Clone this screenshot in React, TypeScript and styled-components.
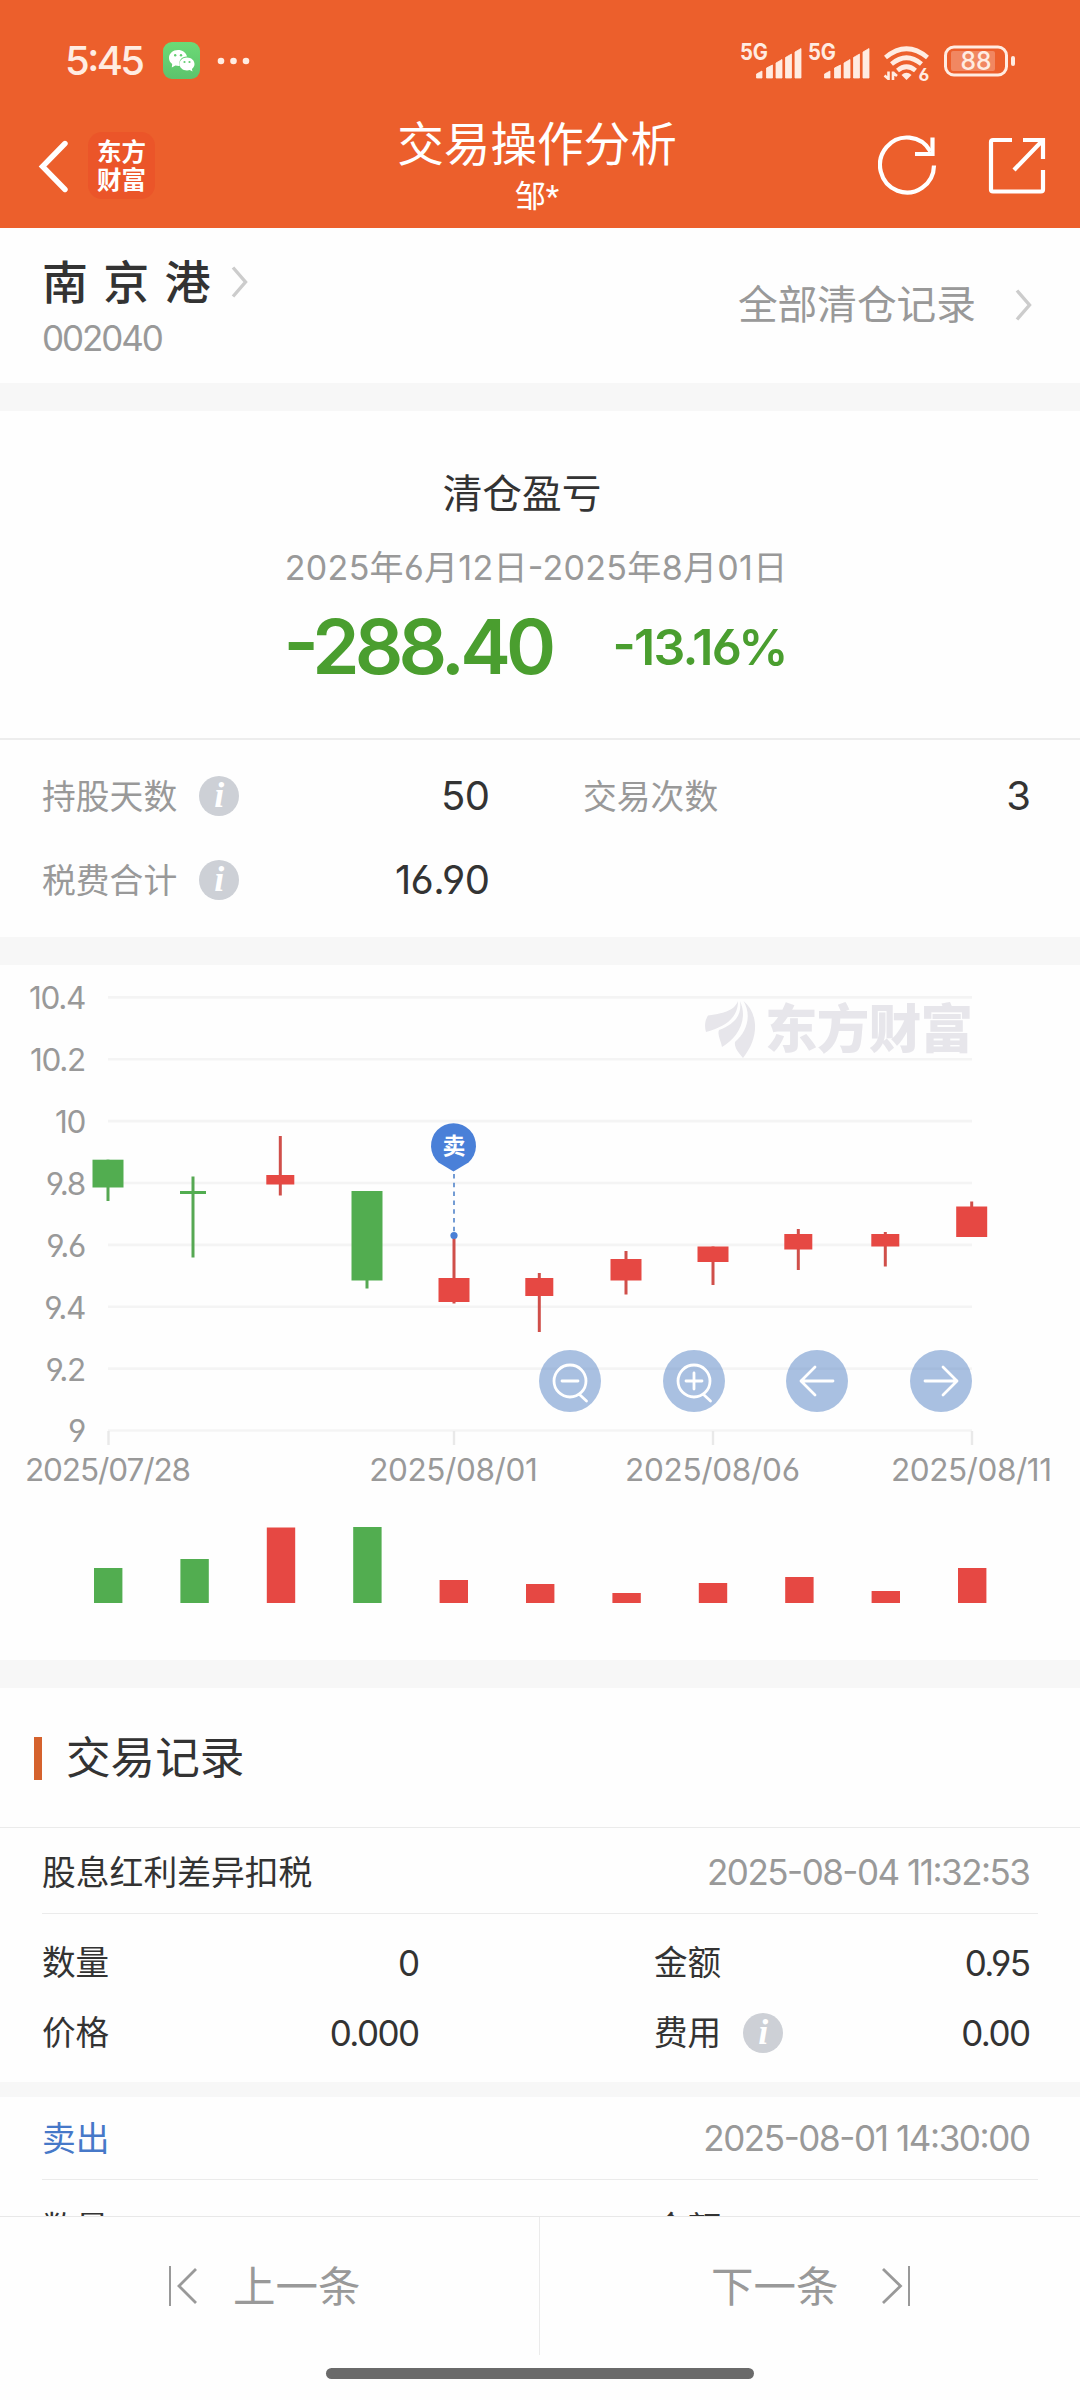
import React from "react";
import styled, { createGlobalStyle } from "styled-components";

const FONT = `Inter, "Noto Sans CJK SC", sans-serif`;
const GREEN = "#52ad50";
const RED = "#e64843";
const STATUS = "#ffece2";

const GlobalStyle = createGlobalStyle`
  * { box-sizing: border-box; }
  body {
    margin: 0;
    background: #fefefe;
    font-family: ${FONT};
    font-feature-settings: "case", "cv03", "cv04";
  }
`;

const Screen = styled.div`
  width: 1080px;
  height: 2400px;
  display: flex;
  flex-direction: column;
  overflow: hidden;
  background: #fefefe;
  color: #333;
`;

const Label = styled.span<{ $size: number; $color?: string; $weight?: number; $track?: number }>`
  font-size: ${(p) => p.$size}px;
  line-height: ${(p) => Math.round(p.$size * 1.2)}px;
  color: ${(p) => p.$color ?? "#333"};
  font-weight: ${(p) => p.$weight ?? 400};
  letter-spacing: ${(p) => p.$track ?? 0}px;
  margin-right: ${(p) => -(p.$track ?? 0)}px;
  white-space: pre;
`;

/* ---------- header ---------- */

const Header = styled.header`
  height: 228px;
  flex: none;
  background: #ec5f2c;
  color: #fff;
`;

const StatusBar = styled.div`
  height: 104px;
  padding: 17px 64px 0 65px;
  display: flex;
  align-items: center;
  justify-content: space-between;
`;

const StatusGroup = styled.div`
  display: flex;
  align-items: center;
`;

const SignalPair = styled.div`
  display: flex;
  margin-right: 7px;
`;

const WechatTile = styled.div`
  width: 37px;
  height: 37px;
  margin: 0 17px 0 18px;
  border-radius: 9px;
  background: linear-gradient(#6cda76, #5cc36c);
`;

const NavBar = styled.nav`
  height: 124px;
  padding: 0 34px 0 36px;
  display: grid;
  grid-template-columns: 1fr auto 1fr;
  align-items: start;
`;

const NavStart = styled.div`
  display: flex;
  align-items: center;
  padding-top: 28px;
  gap: 18px;
`;

const NavEnd = styled.div`
  display: flex;
  justify-content: flex-end;
  padding-top: 30px;
  gap: 50px;
`;

const Brand = styled.div`
  width: 67px;
  height: 67px;
  border-radius: 14px;
  background: #eb5529;
  display: flex;
  flex-direction: column;
  align-items: center;
  justify-content: center;
  font-size: 24.5px;
  line-height: 28px;
  font-weight: 700;
`;

const NavTitle = styled.div`
  display: flex;
  flex-direction: column;
  align-items: center;
  padding-top: 12px;
  margin-left: -8px;
  gap: 6px;
`;

const Owner = styled(Label)`
  font-feature-settings: normal;
  font-family: Roboto, "Noto Sans CJK SC", sans-serif;
`;

/* ---------- shared ---------- */

const Content = styled.main`
  flex: 1;
  min-height: 0;
  overflow: hidden;
`;

const Gap = styled.div<{ $h: number }>`
  height: ${(p) => p.$h}px;
  background: #f7f7f7;
`;

const InfoDot = styled.i`
  width: 40px;
  height: 40px;
  border-radius: 50%;
  background: #cdd0d6;
  color: #fff;
  display: inline-flex;
  justify-content: center;
  font: italic 700 36px/38px "Liberation Serif", serif;
`;

/* ---------- stock row ---------- */

const StockRow = styled.section`
  height: 155px;
  padding: 26px 48px 0 42px;
  display: flex;
  justify-content: space-between;
`;

const StockName = styled.div`
  display: flex;
  align-items: center;
  gap: 20px;
  height: 56px;
`;

const StockCode = styled.div`
  display: flex;
  padding-top: 7px;
`;

const AllRecords = styled.div`
  display: flex;
  align-items: center;
  height: 102px;
  gap: 39px;
`;

/* ---------- profit ---------- */

const Profit = styled.section`
  height: 329px;
  padding-top: 59px;
  border-bottom: 2px solid #ededed;
  display: flex;
  flex-direction: column;
  align-items: center;
`;

const ProfitDate = styled.div`
  display: flex;
  margin: 29px 0 0 -8px;
`;

const ProfitTitle = styled.div`
  display: flex;
  margin-left: -36px;
`;

const ProfitNumbers = styled.div`
  display: flex;
  align-items: center;
  justify-content: space-between;
  width: 505px;
  margin: 13px 0 0 -8px;
`;

const Stats = styled.section`
  height: 197px;
  padding: 14px 49px 0 42px;
  display: grid;
  grid-template-columns: 448px 448px;
  grid-auto-rows: 84px;
  column-gap: 93px;
`;

const Pair = styled.div`
  display: flex;
  align-items: center;
  justify-content: space-between;
`;

const Tagged = styled.div`
  display: flex;
  align-items: center;
  gap: 22px;
`;

/* ---------- chart ---------- */

const ChartPanel = styled.section`
  position: relative;
  height: 695px;
`;

const ChartControls = styled.div`
  position: absolute;
  left: 539px;
  top: 385px;
  width: 433px;
  display: flex;
  justify-content: space-between;
`;

const ChartButton = styled.button`
  width: 62px;
  height: 62px;
  padding: 0;
  border: 0;
  border-radius: 50%;
  background: rgba(74, 124, 193, 0.47);
  display: flex;
`;

type Candle = {
  x: number;
  w: number;
  top: number;
  bottom: number;
  hi: number;
  lo: number;
  up: boolean;
  vol: number;
};

const candles: Candle[] = [
  { x: 108, w: 31, top: 194.7, bottom: 222.5, hi: 194.7, lo: 236, up: false, vol: 35 },
  { x: 193, w: 26, top: 226, bottom: 229, hi: 211.5, lo: 292.5, up: false, vol: 44 },
  { x: 280.3, w: 28, top: 210, bottom: 219.5, hi: 171, lo: 230.5, up: true, vol: 75.5 },
  { x: 367, w: 31, top: 226, bottom: 315.5, hi: 226, lo: 323.5, up: false, vol: 76 },
  { x: 454, w: 31, top: 313, bottom: 337, hi: 272, lo: 338.5, up: true, vol: 23 },
  { x: 539.3, w: 28, top: 313, bottom: 331, hi: 308, lo: 367, up: true, vol: 19 },
  { x: 626, w: 31, top: 294, bottom: 315.5, hi: 286, lo: 329.5, up: true, vol: 10 },
  { x: 713, w: 31, top: 281.5, bottom: 297, hi: 281.5, lo: 320, up: true, vol: 20 },
  { x: 798.3, w: 28, top: 269, bottom: 284.5, hi: 264, lo: 305, up: true, vol: 26 },
  { x: 885.3, w: 28, top: 269, bottom: 281.5, hi: 267, lo: 301.5, up: true, vol: 12 },
  { x: 971.7, w: 31, top: 241.5, bottom: 272, hi: 236.5, lo: 272, up: true, vol: 35 },
];

const priceLabels = ["10.4", "10.2", "10", "9.8", "9.6", "9.4", "9.2", "9"];
const dateLabels = [
  { x: 108.5, text: "2025/07/28", w: 166 },
  { x: 454, text: "2025/08/01", w: 168.5 },
  { x: 713, text: "2025/08/06", w: 175 },
  { x: 972, text: "2025/08/11", w: 161 },
];

const Chart = () => (
  <svg width="1080" height="695" viewBox="0 0 1080 695" fontFamily={FONT}>
    {priceLabels.map((t, i) => {
      const y = 32.4 + i * 61.87;
      return (
        <g key={t}>
          <line x1="108" x2="972" y1={y} y2={y} stroke="#f4f4f4" strokeWidth="2.6" />
          <text x="85" y={y + 11.9} textAnchor="end" fontSize="31.5" letterSpacing="-1.3" fill="#999">
            {t}
          </text>
        </g>
      );
    })}
    {dateLabels.map((d) => (
      <g key={d.text}>
        <line x1={d.x} x2={d.x} y1="466" y2="480" stroke="#e9e9e9" strokeWidth="2.4" />
        <text x={d.x - d.w / 2 - 0.5} y="516.3" fontSize="31.5" textLength={d.w} fill="#999">
          {d.text}
        </text>
      </g>
    ))}
    <g fill="#e7e6eb">
      <path d="M738 36 C735 44 727 48 708 50.500 C704.500 56 704.500 62 706 67 C724 62 738 54 738 36 Z" />
      <path d="M740 36 C742 50 735 59 719 65 C717 70 721 76 722 82 C736 74 749 56 740 36 Z" />
      <path d="M743.500 36 C758 48 760 72 743 93 C739 88 734 83 735 77 C747 67 752 50 743.500 36 Z" />
      <text x="765" y="82.500" fontSize="52.500" fontWeight="900" textLength="208" fontFamily='"Noto Sans CJK SC", sans-serif'>
        东方财富
      </text>
    </g>
    {candles.map((c) => {
      const fill = c.up ? RED : GREEN;
      return (
        <g key={c.x}>
          <line x1={c.x} x2={c.x} y1={c.hi} y2={c.lo} stroke={c.up ? "#d04f4a" : "#56a853"} strokeWidth="3" />
          <rect x={c.x - c.w / 2} y={c.top} width={c.w} height={c.bottom - c.top} fill={fill} />
        </g>
      );
    })}
    {candles.map((c, i) => (
      <rect
        key={c.x}
        x={94 + i * 86.4}
        y={638 - c.vol}
        width="28.4"
        height={c.vol}
        fill={c.up ? RED : GREEN}
      />
    ))}
    <line x1="454" x2="454" y1="209" y2="268" stroke="#6592d0" strokeWidth="1.8" strokeDasharray="4.5 4.3" />
    <circle cx="454" cy="270.5" r="3.6" fill="#4a80d6" />
    <path d="M453.500 206.500 L438.500 197.500 A22.500 22.500 0 1 1 468.500 197.500 Z" fill="#4a80d8" />
    <text x="454" y="188.700" textAnchor="middle" fontSize="23" fontWeight="700" fill="#fff">
      卖
    </text>
  </svg>
);

/* ---------- records ---------- */

const SectionTitle = styled.h2`
  height: 140px;
  margin: 0;
  padding: 1px 0 0 34px;
  border-bottom: 1px solid #ebebeb;
  display: flex;
  align-items: center;
  gap: 24px;
`;

const TitleMark = styled.span`
  width: 8px;
  height: 43px;
  background: #d5622d;
`;

const RecordList = styled.section`
  padding-top: 3px;
`;

const Record = styled.article`
  display: flex;
  flex-direction: column;
`;

const RecordHead = styled.div`
  height: 83px;
  margin: 0 42px;
  padding: 0 7px 0 0;
  border-bottom: 1px solid #ebebeb;
  display: flex;
  align-items: center;
  justify-content: space-between;
`;

const RecordBody = styled.div`
  height: 168px;
  padding: 14px 49px 0 42px;
  display: grid;
  grid-template-columns: 378px 377px;
  justify-content: space-between;
  grid-auto-rows: 70px;
`;

const Footer = styled.footer`
  height: 184px;
  flex: none;
  border-top: 1px solid #e8e8e8;
  background: #fefefe;
  display: flex;
  flex-direction: column;
  align-items: center;
`;

const Pager = styled.div`
  width: 100%;
  height: 138px;
  display: grid;
  grid-template-columns: 1fr 1fr;
`;

const PagerItem = styled.div<{ $side: "prev" | "next" }>`
  display: flex;
  align-items: center;
  gap: ${(p) => (p.$side === "prev" ? 35 : 42)}px;
  padding-left: ${(p) => (p.$side === "prev" ? 168 : 171)}px;
  border-right: ${(p) => (p.$side === "prev" ? "1px solid #ebebeb" : "none")};
`;

const HomeIndicator = styled.div`
  width: 428px;
  height: 11px;
  margin-top: 13px;
  border-radius: 6px;
  background: #6a6a6a;
`;

/* ---------- icons ---------- */

const WechatGlyph = () => (
  <svg width="37" height="37" viewBox="0 0 37 37">
    <path d="M15 8C10 8 6 11.500 6 16c0 2.500 1.300 4.600 3.200 6L8.800 25.500l3.600-2c3 .8 4.500.3 4.500.3C15 18.500 19 14.300 24 14.500 23 10.500 19.500 8 15 8z" fill="#fff" />
    <path d="M24 15.500c-4.200 0-7.500 2.900-7.500 6.500s3.300 6.500 7.500 6.500c1 0 2-.2 2.800-.5l2.700 1.400-.6-2.500c1.600-1.200 2.600-2.900 2.600-4.900 0-3.600-3.300-6.500-7.500-6.500z" fill="#fff" />
    <g fill="#62cd70">
      <circle cx="12.200" cy="13.300" r="1.200" />
      <circle cx="18" cy="13.300" r="1.200" />
      <circle cx="21.500" cy="20" r="1.100" />
      <circle cx="26.500" cy="20" r="1.100" />
    </g>
  </svg>
);

const Signal = () => (
  <svg width="68" height="56" viewBox="0 -8 68 56" fill={STATUS}>
    <text x="0" y="19" fontSize="22.500" fontWeight="700" textLength="28" lengthAdjust="spacingAndGlyphs" fontFamily={FONT}>
      5G
    </text>
    <path d="M16.500 33 L22 30 V37 H16.500 Z M26.500 27 L32.500 24 V37 H26.500 Z M36 22 L42 18.500 V37 H36 Z M45.500 16.500 L51.500 13 V37 H45.500 Z M55 11 L61 7.500 V37 H55 Z" stroke={STATUS} strokeWidth="0.8" strokeLinejoin="round" />
  </svg>
);

const Wifi = () => (
  <svg width="48" height="52" viewBox="0 -4 48 52" fill="none" stroke={STATUS} strokeWidth="4.600">
    <path d="M2.500 18.500 Q23.500 1 44.500 18.500" />
    <path d="M8.500 25 Q23.500 12.500 38.500 25" />
    <path d="M14.500 31.500 Q23.500 24 32.500 31.500" />
    <path d="M18.500 36 Q23.500 31.500 28.500 36 L23.500 41 Z" fill={STATUS} stroke="none" />
    <path d="M5.500 32.500 V41 M1.500 36.500 L5.500 40 M10 41 V32.500 M10 33.500 L14 37" strokeWidth="2.600" />
    <text x="35.500" y="41.500" fontSize="17.500" fontWeight="700" fill={STATUS} stroke="none" fontFamily={FONT}>
      6
    </text>
  </svg>
);

const Battery = () => (
  <svg width="72" height="34" viewBox="0 0 72 34">
    <rect x="1.500" y="3" width="61" height="28" rx="8.500" fill="none" stroke={STATUS} strokeWidth="3" />
    <rect x="7" y="7" width="44" height="20" rx="2" fill="#fff" opacity="0.250" />
    <rect x="67" y="12" width="4" height="10" rx="2" fill={STATUS} />
    <text x="16.500" y="26.300" fontSize="26" fontWeight="500" textLength="31" lengthAdjust="spacingAndGlyphs" fill={STATUS} fontFamily={FONT}>
      88
    </text>
  </svg>
);

const Chevron = () => (
  <svg width="17" height="32" viewBox="0 0 17 32" fill="none" stroke="#ccc" strokeWidth="3.400">
    <path d="M2 1.500 L14.500 16 L2 30.500" />
  </svg>
);

const stroke = { fill: "none", stroke: "#fff", strokeWidth: 4.2 } as const;

const BackIcon = () => (
  <svg width="34" height="54" viewBox="0 0 34 54" {...stroke} strokeWidth={5.4}>
    <path d="M29 4.500 L6.500 27.500 L29 50.500" strokeLinecap="round" />
  </svg>
);

const RefreshIcon = () => (
  <svg width="60" height="62" viewBox="0 0 60 62" {...stroke}>
    <path d="M56 31.500 A27 27.500 0 1 1 52.500 17.500" />
    <path d="M54.500 3.500 V20 H37" />
  </svg>
);

const ShareIcon = () => (
  <svg width="58" height="62" viewBox="0 0 58 62" {...stroke}>
    <path d="M24 6 H5 Q3 6 3 8 V55.500 Q3 57.500 5 57.500 H53 Q55 57.500 55 55.500 V36" />
    <path d="M35 6 H55 V25 M55 6 L26 36" />
  </svg>
);

const GlyphSvg = ({ d }: { d: string }) => (
  <svg width="62" height="62" viewBox="0 0 62 62" fill="none" stroke="#fff" strokeWidth="2.800" strokeLinecap="round" strokeLinejoin="round">
    <path d={d} />
  </svg>
);

const LENS = "M15 31 a16 16 0 1 1 32 0 a16 16 0 1 1 -32 0 M40.500 44.500 L47.500 51 M23 31 H39";

const EdgeIcon = ({ next }: { next?: boolean }) => (
  <svg width="30" height="42" viewBox="0 0 30 42" fill="none" stroke="#999">
    <path d={next ? "M28 1 V41" : "M2 1 V41"} strokeWidth="2" />
    <path d={next ? "M2 4 L19.500 21 L2 38" : "M28 4 L11 21 L28 38"} strokeWidth="2.800" />
  </svg>
);

const Field = ({ label, value, info }: { label: string; value?: string; info?: boolean }) => (
  <Pair>
    <Tagged>
      <Label $size={33.6}>{label}</Label>
      {info && <InfoDot>i</InfoDot>}
    </Tagged>
    {value && (
      <Label $size={35} $track={-1.6}>
        {value}
      </Label>
    )}
  </Pair>
);

const Stat = ({ label, value, info }: { label: string; value: string; info?: boolean }) => (
  <Pair>
    <Tagged>
      <Label $size={33.8} $color="#999">
        {label}
      </Label>
      {info && <InfoDot>i</InfoDot>}
    </Tagged>
    <Label $size={40} $track={-0.6}>
      {value}
    </Label>
  </Pair>
);

export default function App() {
  return (
    <Screen>
      <GlobalStyle />
      <Header>
        <StatusBar>
          <StatusGroup>
            <Label $size={40} $color={STATUS} $weight={500} $track={-2.6}>
              5:45
            </Label>
            <WechatTile>
              <WechatGlyph />
            </WechatTile>
            <svg width="34" height="8" viewBox="0 0 34 8" fill={STATUS}>
              <circle cx="4" cy="4" r="3.300" />
              <circle cx="16.500" cy="4" r="3.300" />
              <circle cx="29" cy="4" r="3.300" />
            </svg>
          </StatusGroup>
          <StatusGroup>
            <SignalPair>
              <Signal />
              <Signal />
            </SignalPair>
            <Wifi />
            <svg width="13" height="1" />
            <Battery />
          </StatusGroup>
        </StatusBar>
        <NavBar>
          <NavStart>
            <BackIcon />
            <Brand>
              <span>东方</span>
              <span>财富</span>
            </Brand>
          </NavStart>
          <NavTitle>
            <Label $size={46.6} $color="#fff">
              交易操作分析
            </Label>
            <Owner $size={31} $color="#fff">
              邹*
            </Owner>
          </NavTitle>
          <NavEnd>
            <RefreshIcon />
            <ShareIcon />
          </NavEnd>
        </NavBar>
      </Header>

      <Content>
        <StockRow>
          <div>
            <StockName>
              <Label $size={46} $weight={500} $track={1.5}>
                南 京 港
              </Label>
              <Chevron />
            </StockName>
            <StockCode>
              <Label $size={35} $color="#999" $track={-2.1}>
                002040
              </Label>
            </StockCode>
          </div>
          <AllRecords>
            <Label $size={39.7} $color="#999">
              全部清仓记录
            </Label>
            <Chevron />
          </AllRecords>
        </StockRow>
        <Gap $h={28} />

        <Profit>
          <ProfitTitle>
            <Label $size={39.7}>清仓盈亏</Label>
          </ProfitTitle>
          <ProfitDate>
            <Label $size={34} $color="#999" $track={0.3}>
              2025年6月12日-2025年8月01日
            </Label>
          </ProfitDate>
          <ProfitNumbers>
            <Label $size={76} $color="#4a9e2f" $weight={600} $track={-4.8}>
              -288.40
            </Label>
            <Label $size={50} $color="#4a9e2f" $weight={600} $track={-1.7}>
              -13.16%
            </Label>
          </ProfitNumbers>
        </Profit>

        <Stats>
          <Stat label="持股天数" value="50" info />
          <Stat label="交易次数" value="3" />
          <Stat label="税费合计" value="16.90" info />
        </Stats>
        <Gap $h={28} />

        <ChartPanel>
          <Chart />
          <ChartControls>
            <ChartButton aria-label="缩小">
              <GlyphSvg d={LENS} />
            </ChartButton>
            <ChartButton aria-label="放大">
              <GlyphSvg d={LENS + " M31 23 V39"} />
            </ChartButton>
            <ChartButton aria-label="左移">
              <GlyphSvg d="M47 31 H15 M29 17 L15 31 L29 45" />
            </ChartButton>
            <ChartButton aria-label="右移">
              <GlyphSvg d="M15 31 H47 M33 17 L47 31 L33 45" />
            </ChartButton>
          </ChartControls>
        </ChartPanel>
        <Gap $h={28} />

        <SectionTitle>
          <TitleMark />
          <Label $size={44.6}>交易记录</Label>
        </SectionTitle>

        <RecordList>
          <Record>
            <RecordHead>
              <Label $size={33.8}>股息红利差异扣税</Label>
              <Label $size={35} $color="#999" $track={-1.5}>
                2025-08-04 11:32:53
              </Label>
            </RecordHead>
            <RecordBody>
              <Field label="数量" value="0" />
              <Field label="金额" value="0.95" />
              <Field label="价格" value="0.000" />
              <Field label="费用" value="0.00" info />
            </RecordBody>
          </Record>
          <Gap $h={15} />
          <Record>
            <RecordHead>
              <Label $size={33.8} $color="#4678c8">
                卖出
              </Label>
              <Label $size={35} $color="#999" $track={-1.4}>
                2025-08-01 14:30:00
              </Label>
            </RecordHead>
            <RecordBody>
              <Field label="数量" />
              <Field label="金额" />
            </RecordBody>
          </Record>
        </RecordList>
      </Content>

      <Footer>
        <Pager>
          <PagerItem $side="prev">
            <EdgeIcon />
            <Label $size={42.5} $color="#999">
              上一条
            </Label>
          </PagerItem>
          <PagerItem $side="next">
            <Label $size={42.5} $color="#999">
              下一条
            </Label>
            <EdgeIcon next />
          </PagerItem>
        </Pager>
        <HomeIndicator />
      </Footer>
    </Screen>
  );
}
